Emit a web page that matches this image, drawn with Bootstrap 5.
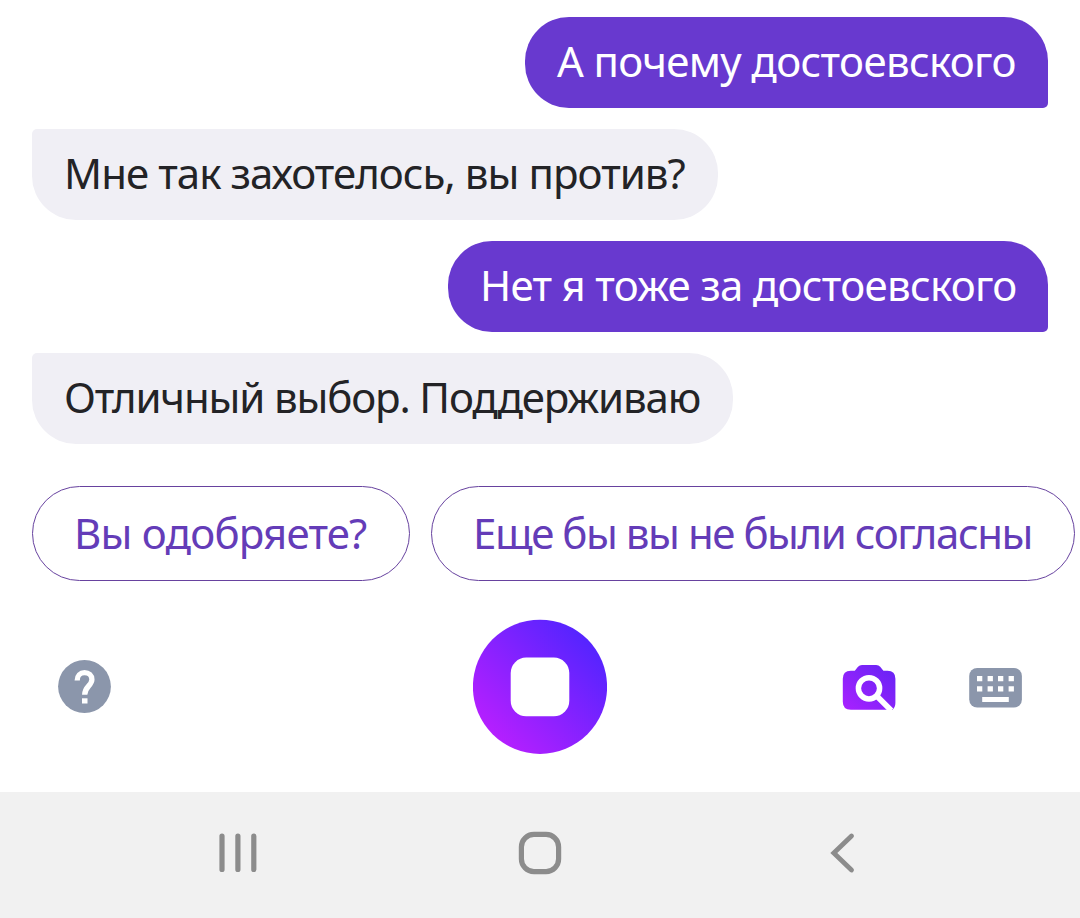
<!DOCTYPE html>
<html lang="ru">
<head>
    <title>Алиса</title>
    <meta charset="utf-8">
    <meta name="viewport" content="width=device-width, initial-scale=1">
    <link href="https://cdn.jsdelivr.net/npm/bootstrap@5.3.3/dist/css/bootstrap.min.css" rel="stylesheet">
    <script src="https://cdn.jsdelivr.net/npm/bootstrap@5.3.3/dist/js/bootstrap.bundle.min.js"></script>
    <style>
        body {
            height: 918px;
            font-family: "Noto Sans", "Open Sans", sans-serif;
            font-size: 42px;
            background-color: #fff;
        }
        .chat {
            padding: 17px 32px 0;
            gap: 21px;
        }
        .bubble {
            height: 91px;
            line-height: 88px;
            padding: 0 32px;
            border-radius: 44px;
        }
        .bubble-user {
            color: #fff;
            background-color: #6839cf;
            border-bottom-right-radius: 5px;
        }
        .bubble-bot {
            color: #232326;
            background-color: #f0eff5;
            border-top-left-radius: 5px;
        }
        .msg-1 { width: 523px; letter-spacing: -0.64px; }
        .msg-2 { width: 686px; letter-spacing: -0.95px; }
        .msg-3 { width: 600px; letter-spacing: -0.7px; }
        .msg-4 { width: 701px; letter-spacing: -1.15px; }
        .suggests {
            padding: 42px 0 0 32px;
            gap: 21px;
        }
        .suggest {
            --bs-btn-color: #643cb8;
            --bs-btn-border-color: #67429f;
            --bs-btn-hover-bg: #f0eff5;
            height: 95px;
            padding: 0 41px 2px;
            font-size: 42px;
            line-height: 91px;
            text-align: left;
        }
        .sug-1 { width: 378px; letter-spacing: -0.78px; }
        .sug-2 { width: 644px; letter-spacing: -1.45px; }
        .controls {
            height: 211px;
            padding: 0 58px;
        }
        .controls svg, .phone-nav svg {
            display: block;
        }
        .side {
            width: 180px;
        }
        .phone-nav {
            height: 126px;
            background-color: #f1f1f1;
        }
    </style>
</head>
<body class="d-flex flex-column overflow-hidden">
    <main class="chat d-flex flex-column text-nowrap">
        <div class="bubble bubble-user msg-1 align-self-end">А почему достоевского</div>
        <div class="bubble bubble-bot msg-2 align-self-start">Мне так захотелось, вы против?</div>
        <div class="bubble bubble-user msg-3 align-self-end">Нет я тоже за достоевского</div>
        <div class="bubble bubble-bot msg-4 align-self-start">Отличный выбор. Поддерживаю</div>
    </main>

    <div class="suggests d-flex text-nowrap">
        <button type="button" class="btn suggest sug-1 rounded-pill flex-shrink-0">Вы одобряете?</button>
        <button type="button" class="btn suggest sug-2 rounded-pill flex-shrink-0">Еще бы вы не были согласны</button>
    </div>

    <div class="controls d-flex align-items-center justify-content-between">
        <!-- help -->
        <div class="side">
            <svg width="53" height="53" viewBox="0 0 53 53">
                <circle cx="26.5" cy="26.5" r="26.4" fill="#8b96ab"/>
                <path d="M19.2 20.4c0-4.8 3-7.7 7.3-7.7s7.4 2.7 7.4 6.9c0 6.2-7.2 6.7-7.2 15.2" fill="none" stroke="#fff" stroke-width="5.3"/>
                <rect x="24" y="38.3" width="5.5" height="5.2" fill="#fff"/>
            </svg>
        </div>

        <!-- stop listening -->
        <svg width="134" height="135" viewBox="0 0 134 135">
            <defs>
                <linearGradient id="alice" x1="0.12" y1="0.86" x2="0.86" y2="0.15">
                    <stop offset="0" stop-color="#b71fff"/>
                    <stop offset="1" stop-color="#5524ff"/>
                </linearGradient>
            </defs>
            <circle cx="67" cy="67.8" r="67.1" fill="url(#alice)"/>
            <rect x="37.7" y="38.6" width="58.6" height="58.6" rx="15.5" fill="#fff"/>
        </svg>

        <div class="side d-flex align-items-center justify-content-between">
            <!-- camera search -->
            <svg width="54" height="48" viewBox="0 0 54 48">
                <defs>
                    <linearGradient id="camera" x1="0" y1="1" x2="1" y2="0">
                        <stop offset="0" stop-color="#a921ff"/>
                        <stop offset="1" stop-color="#6424f4"/>
                    </linearGradient>
                </defs>
                <path d="M8.8 7.8h4l3.2-4q1.5-1.8 4-1.8h14.2q2.500 0 4 1.8l3.2 4h4q8 0 8 8v24q0 4.5-2.8 6.9H8.8q-8 0-8-8v-22.9q0-8 8-8z" fill="url(#camera)"/>
                <circle cx="27" cy="25.3" r="10.6" fill="none" stroke="#fff" stroke-width="5.5"/>
                <path d="M34.500 32.8l14.8 14.8" stroke="#fff" stroke-width="5.6"/>
            </svg>
            <!-- keyboard -->
            <svg width="53" height="42" viewBox="0 0 53 42">
                <rect x="0.2" y="2" width="52.7" height="39.5" rx="8" fill="#8b96ab"/>
                <path d="M8 10h5.3v5.3H8zM18.6 10h5.3v5.3h-5.3zM29 10h5.3v5.3H29zM39.6 10h5.3v5.3h-5.3zM8 20.3h5.3v5.3H8zM18.6 20.3h5.3v5.3h-5.3zM29 20.3h5.3v5.3H29zM39.6 20.3h5.3v5.3h-5.3zM13.2 31h26.6v5H13.2z" fill="#fff"/>
            </svg>
        </div>
    </div>

    <!-- phone navigation bar -->
    <footer class="phone-nav">
        <svg width="1080" height="126" viewBox="0 0 1080 126" fill="none" stroke="#8c8c8c" stroke-width="5.2" stroke-linecap="round">
            <path d="M222 44v33.5M237.9 44v33.5M253.8 44v33.5"/>
            <rect x="521.4" y="42.4" width="37.2" height="37.2" rx="12.5"/>
            <path d="M851.5 44L833.8 61l17.7 17" stroke-width="4.8" stroke-linejoin="miter"/>
        </svg>
    </footer>
</body>
</html>
